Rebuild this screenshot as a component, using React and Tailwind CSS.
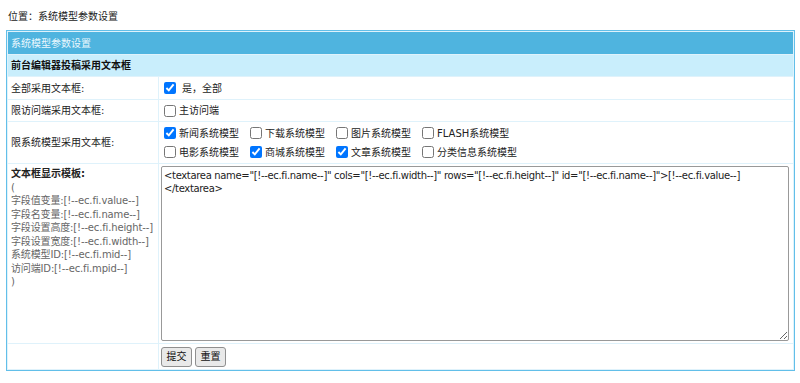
import React from "react";

const font = { fontFamily: '"DejaVu Sans", "Noto Sans CJK SC", sans-serif' };

function Cb({ checked, label }) {
  return (
    <label className="flex items-center gap-[3px] whitespace-nowrap">
      <input type="checkbox" defaultChecked={checked} className="m-0 h-[12px] w-[12px] accent-[#0075ff]" />
      <span>{label}</span>
    </label>
  );
}

export default function App() {
  const tpl =
    '<textarea name="[!--ec.fi.name--]" cols="[!--ec.fi.width--]" rows="[!--ec.fi.height--]" id="[!--ec.fi.name--]">[!--ec.fi.value--]\n</textarea>';
  return (
    <div className="w-[800px] h-[383px] bg-white text-[10px] text-[#222]" style={font}>
      <div className="h-[30px] pl-[8px] pt-[10px] leading-[13px]">位置：系统模型参数设置</div>
      <div className="mx-[6px] w-[789px] border border-[#62bfe9] bg-[#dff2fb] p-px">
        <div className="grid grid-cols-[150px_1fr] gap-px">
          <div className="col-span-2 h-[22px] bg-[#4fb4df] pl-[3px] flex items-center text-[#eaf7fd]">系统模型参数设置</div>
          <div className="col-span-2 h-[21px] bg-[#c9eefc] pl-[3px] flex items-center font-bold text-[#111]">前台编辑器投稿采用文本框</div>

          <div className="h-[22px] bg-white pl-[3px] flex items-center">全部采用文本框:</div>
          <div className="h-[22px] bg-white pl-[5px] flex items-center">
            <label className="flex items-center gap-[6px]">
              <input type="checkbox" defaultChecked className="m-0 h-[12px] w-[12px] accent-[#0075ff]" />
              <span>是，全部</span>
            </label>
          </div>

          <div className="h-[21px] bg-white pl-[3px] flex items-center">限访问端采用文本框:</div>
          <div className="h-[21px] bg-white pl-[5px] flex items-center">
            <Cb label="主访问端" />
          </div>

          <div className="h-[41px] bg-white pl-[3px] flex items-center">限系统模型采用文本框:</div>
          <div className="h-[41px] bg-white pl-[5px] flex flex-col justify-center gap-[4px]">
            <div className="flex items-center gap-[11px]">
              <Cb checked label="新闻系统模型" />
              <Cb label="下载系统模型" />
              <Cb label="图片系统模型" />
              <Cb label="FLASH系统模型" />
            </div>
            <div className="flex items-center gap-[11px]">
              <Cb label="电影系统模型" />
              <Cb checked label="商城系统模型" />
              <Cb checked label="文章系统模型" />
              <Cb label="分类信息系统模型" />
            </div>
          </div>

          <div className="h-[179px] bg-white pl-[3px] pt-[3px] leading-[13.5px]">
            <div className="font-bold text-[#222]">文本框显示模板:</div>
            <div className="text-[#666] tracking-[-0.15px]">
              <div>(</div>
              <div>字段值变量:[!--ec.fi.value--]</div>
              <div>字段名变量:[!--ec.fi.name--]</div>
              <div>字段设置高度:[!--ec.fi.height--]</div>
              <div>字段设置宽度:[!--ec.fi.width--]</div>
              <div>系统模型ID:[!--ec.fi.mid--]</div>
              <div>访问端ID:[!--ec.fi.mpid--]</div>
              <div>)</div>
            </div>
          </div>
          <div className="h-[179px] bg-white pl-[2px] pt-[2px] pr-[4px] pb-[2px]">
            <textarea
              defaultValue={tpl}
              className="block h-full w-full resize-y rounded-[2px] border border-[#999] px-[2px] py-[2px] text-[10px] leading-[13px] tracking-[-0.33px] text-[#222] outline-none"
              style={font}
            />
          </div>

          <div className="h-[25px] bg-white" />
          <div className="h-[25px] bg-white pl-[2px] flex items-center gap-[3px]">
            <button className="h-[20px] w-[31px] rounded-[3px] border border-[#8f8f8f] bg-[#e9e9e9] text-[10px] leading-[12px] text-[#111]" style={font}>提交</button>
            <button className="h-[20px] w-[31px] rounded-[3px] border border-[#8f8f8f] bg-[#e9e9e9] text-[10px] leading-[12px] text-[#111]" style={font}>重置</button>
          </div>
        </div>
      </div>
    </div>
  );
}
